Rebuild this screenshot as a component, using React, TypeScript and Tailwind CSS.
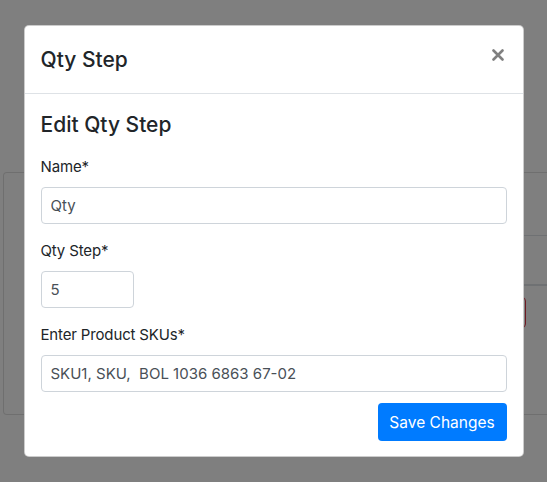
import React from 'react';

function BackgroundPage() {
  // the page sitting behind the modal backdrop
  return (
    <div className="pt-[172px] pl-[3px]">
      <div className="w-[700px] h-[243px] border border-black/[0.125] rounded bg-white">
        <div className="pl-[25px]">
          <div className="h-[63px] border-b border-[#dee2e6]" />
          <div className="h-[50px] border-b-2 border-[#dee2e6]" />
          <div className="mt-[11px] ml-[466px] w-[31px] h-[31px] border border-[#dc3545] rounded" />
        </div>
      </div>
    </div>
  );
}

function Field({ label, value, width }: { label: string; value: string; width?: string }) {
  return (
    <div className="mb-[15px]">
      <label className="block mb-2 text-[15px] leading-[24px] tracking-[-0.01em] text-[#212529]">{label}</label>
      <input
        readOnly
        value={value}
        className={`${width ?? 'w-full'} h-[37px] px-[9px] border border-[#ced4da] rounded bg-white text-[15px] text-[#495057] outline-none`}
      />
    </div>
  );
}

export default function App() {
  return (
    <div className="relative h-screen overflow-hidden bg-white font-['Inter','Liberation_Sans',Arial,sans-serif]">
      <BackgroundPage />

      {/* Backdrop */}
      <div className="absolute inset-0 bg-black/50" />

      {/* Modal */}
      <div className="absolute inset-0 flex justify-center pt-[25px]">
        <div className="w-[500px] h-fit bg-white border border-black/20 rounded-[5px]">
          <div className="flex items-start justify-between h-[68px] px-4 border-b border-[#dee2e6]">
            <h5 className="mt-[18.5px] text-[21px] leading-[30px] font-medium text-[#212529]">Qty Step</h5>
            <button className="mt-[23px] mr-[2.5px]" aria-label="Close">
              <svg width="12" height="12" viewBox="0 0 12 12">
                <path d="M1.5 1.5 L10.5 10.5 M10.5 1.5 L1.5 10.5" stroke="#808080" strokeWidth="2.6" strokeLinecap="round" fill="none" />
              </svg>
            </button>
          </div>

          <div className="px-4 pt-[18px] pb-[15px]">
            <h4 className="mb-[17px] text-[21px] leading-[26.4px] font-medium text-[#212529]">Edit Qty Step</h4>
            <Field label="Name*" value="Qty" />
            <Field label="Qty Step*" value="5" width="w-[93px]" />
            <div>
              <label className="block mb-2 text-[15px] leading-[24px] tracking-[-0.01em] text-[#212529]">Enter Product SKUs*</label>
              <input
                readOnly
                value="SKU1, SKU,  BOL 1036 6863 67-02"
                className="w-full h-[37px] px-[9px] border border-[#ced4da] rounded bg-white text-[15px] text-[#495057] outline-none"
              />
            </div>
            <div className="flex justify-end mt-[11px]">
              <button className="w-[129px] h-[38px] rounded bg-[#007bff] text-white text-[15.5px]">Save Changes</button>
            </div>
          </div>
        </div>
      </div>
    </div>
  );
}
